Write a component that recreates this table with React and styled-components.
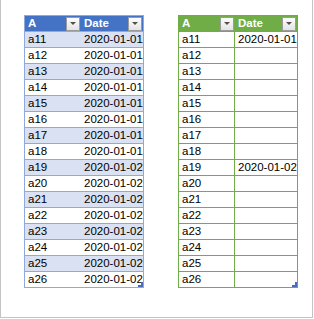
import React from 'react';
import styled, { createGlobalStyle } from 'styled-components';

const GlobalStyle = createGlobalStyle`
  body {
    margin: 0;
    background: #ffffff;
    font-family: "Liberation Sans", Arial, sans-serif;
  }
`;

const Frame = styled.div`
  box-sizing: border-box;
  width: 313px;
  height: 318px;
  border: 1px solid #c4c4c4;
  border-top: none;
  padding: 15px 0 0 23px;
  display: flex;
  align-items: flex-start;
  gap: 34px;
  background: #ffffff;
`;

const Table = styled.div`
  position: relative;
  width: 118px;
  border: 1px solid ${p => p.$line};
  font-size: 11.5px;
  color: #000000;
`;

const Row = styled.div`
  display: grid;
  grid-template-columns: 56px 62px;
  height: 15px;
  border-top: 1px solid ${p => p.$line};
  background: ${p => p.$bg};
`;

const HeaderRow = styled.div`
  display: grid;
  grid-template-columns: 56px 62px;
  height: 15px;
  background: ${p => p.$bg};
  color: #ffffff;
  font-weight: bold;
`;

const HeadCell = styled.div`
  display: flex;
  align-items: center;
  justify-content: space-between;
  padding-left: 3px;
  padding-right: 1px;
  line-height: 15px;
`;

const Cell = styled.div`
  line-height: 15px;
  padding: 0 2px 0 3px;
  white-space: nowrap;
  overflow: hidden;
  text-align: ${p => (p.$right ? 'right' : 'left')};
  border-right: ${p => (p.$divider ? `1px solid ${p.$divider}` : 'none')};
`;

const FilterButton = styled.div`
  box-sizing: border-box;
  width: 14px;
  height: 14px;
  border: 1px solid #9b9b9b;
  background: linear-gradient(#fdfdfd, #e4e4e4);
  display: flex;
  align-items: center;
  justify-content: center;

  &::after {
    content: '';
    width: 0;
    height: 0;
    border-left: 3px solid transparent;
    border-right: 3px solid transparent;
    border-top: 3px solid #505050;
  }
`;

const ResizeGrip = styled.svg`
  position: absolute;
  right: 0;
  bottom: 0;
`;

const rows = Array.from({ length: 16 }, (_, i) => ({
  a: `a${11 + i}`,
  date: i < 8 ? '2020-01-01' : '2020-01-02',
}));

function Header({ bg }) {
  return (
    <HeaderRow $bg={bg}>
      <HeadCell>
        <span>A</span>
        <FilterButton />
      </HeadCell>
      <HeadCell>
        <span>Date</span>
        <FilterButton />
      </HeadCell>
    </HeaderRow>
  );
}

function Grip() {
  return (
    <ResizeGrip width="5" height="5" viewBox="0 0 5 5">
      <path d="M5 0 V5 H0 V3 H3 V0 Z" fill="#4a6ac0" />
    </ResizeGrip>
  );
}

function BlueTable() {
  return (
    <Table $line="#8ea9db">
      <Header bg="#4472c4" />
      {rows.map((r, i) => (
        <Row key={r.a} $line="#8ea9db" $bg={i % 2 === 0 ? '#d9e1f2' : '#ffffff'}>
          <Cell>{r.a}</Cell>
          <Cell $right>{r.date}</Cell>
        </Row>
      ))}
      <Grip />
    </Table>
  );
}

function GreenTable() {
  return (
    <Table $line="#70ad47">
      <Header bg="#70ad47" />
      {rows.map((r, i) => (
        <Row key={r.a} $line="#70ad47" $bg="#ffffff">
          <Cell $divider="#70ad47">{r.a}</Cell>
          <Cell $right>{i === 0 || i === 8 ? r.date : ''}</Cell>
        </Row>
      ))}
      <Grip />
    </Table>
  );
}

export default function App() {
  return (
    <>
      <GlobalStyle />
      <Frame>
        <BlueTable />
        <GreenTable />
      </Frame>
    </>
  );
}
